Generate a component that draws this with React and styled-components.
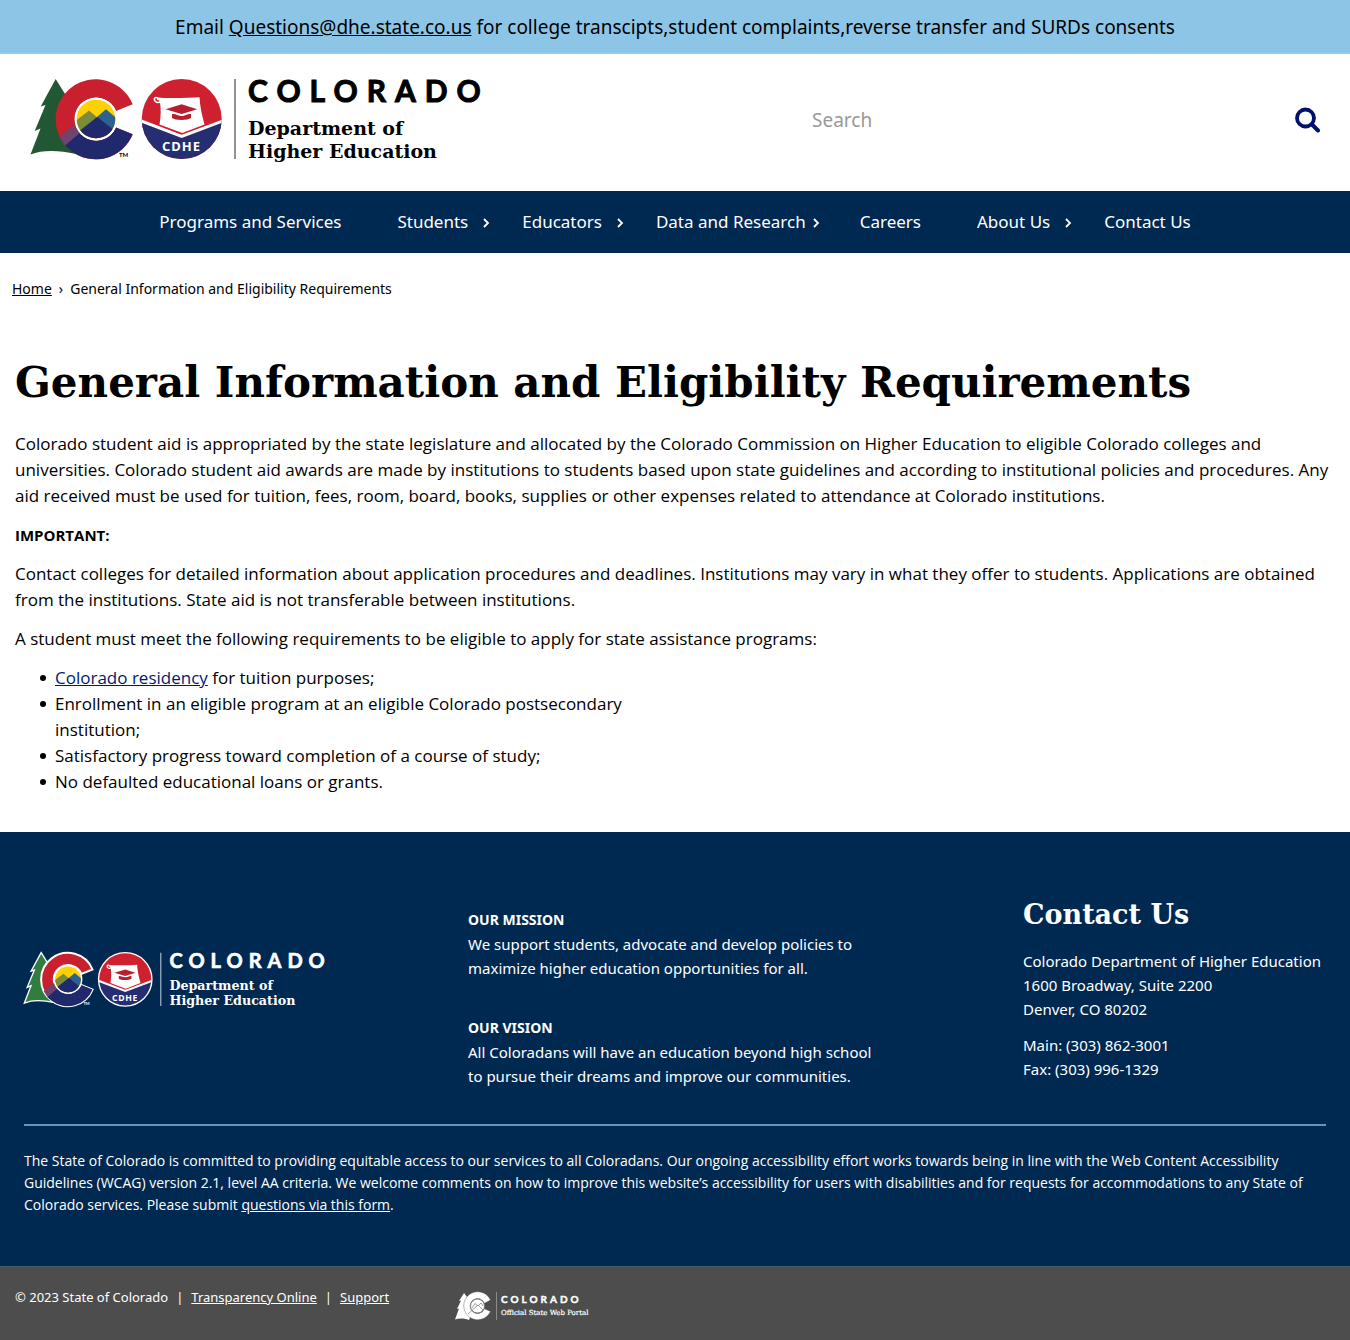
import React from "react";
import styled, { createGlobalStyle } from "styled-components";

const sans = '"Noto Sans", "Open Sans", sans-serif';
const openSans = '"Open Sans", "Noto Sans", sans-serif';
const slab = '"DejaVu Serif", serif';
const navy = "#002952";

const GlobalStyle = createGlobalStyle`
  * { box-sizing: border-box; }
  body { margin: 0; background: #fff; color: #000; font: 15px/24px ${sans}; }
  h1, h2, p, ul, ol { margin: 0; padding: 0; }
  a { color: inherit; }
`;

const Banner = styled.p`
  padding: 14px 24px 12px;
  background: #8dc5e7;
  border-bottom: 1px solid #a9c6e2;
  font-size: 19px;
  line-height: 27px;
  text-align: center;
`;

const Header = styled.header`
  display: flex;
  align-items: flex-start;
  justify-content: space-between;
  gap: 24px;
  padding: 24px 30px 27px;
`;

const LogoLink = styled.a`
  display: block;
  text-decoration: none;
  svg { display: block; overflow: visible; }
`;

const SearchForm = styled.form`
  display: flex;
  align-items: center;
  flex: 0 1 508px;
  padding-top: 24px;
`;

const SearchInput = styled.input`
  flex: 1;
  min-width: 0;
  height: 36px;
  padding: 0;
  border: 0;
  outline: 0;
  background: transparent;
  font: 19px/24px ${sans};
  &::placeholder { color: #999; opacity: 1; }
`;

const IconButton = styled.button`
  display: flex;
  padding: 0;
  border: 0;
  background: none;
  cursor: pointer;
`;

const Nav = styled.nav`
  background: ${navy};
  color: #fff;
`;

const NavList = styled.ul`
  display: flex;
  justify-content: center;
  list-style: none;
`;

const NavItem = styled.li`
  display: flex;
  align-items: center;
  gap: ${(p) => (p.$tight ? "6px" : "14px")};
  height: 62px;
  padding: 0 ${(p) => (p.$tight ? "12px" : p.$menu ? "4px" : "28px")} 0 28px;
`;

const NavLink = styled.a`
  font-size: 17px;
  text-decoration: none;
  white-space: nowrap;
`;

const MenuButton = styled(IconButton)`
  width: 8px;
  color: #fff;
  padding-top: 2px;
`;

const Breadcrumb = styled.ol`
  display: flex;
  gap: 7px;
  padding: 24px 12px 0;
  list-style: none;
  font-size: 14px;
`;

const Content = styled.main`
  padding: 52px 15px 37px;
  font: 17px/26px ${openSans};
`;

const Title = styled.h1`
  margin-bottom: 18px;
  font: bold 42px/60px ${slab};
`;

const Paragraph = styled.p`
  margin-bottom: 13px;
`;

const Important = styled.strong`
  display: block;
  font-size: 15px;
`;

const Requirements = styled.ul`
  max-width: 620px;
  padding-left: 40px;
  list-style: none;
`;

const Requirement = styled.li`
  &::before {
    content: "";
    display: inline-block;
    width: 6px;
    height: 6px;
    margin: 0 9px 3px -15px;
    border-radius: 50%;
    background: #000;
  }
`;

const ContentLink = styled.a`
  color: #001970;
`;

const Footer = styled.footer`
  padding: 60px 24px 50px;
  background: ${navy};
  color: #fff;
`;

const FooterColumns = styled.div`
  display: grid;
  grid-template-columns: 4fr 5fr 303px;
  padding-bottom: 36px;
  border-bottom: 2px solid #6f8fb5;
`;

const FooterLogo = styled.div`
  padding-top: 60px;
`;

const Statements = styled.div`
  display: grid;
  gap: 36px;
  max-width: 420px;
  padding-top: 16px;
`;

const StatementTitle = styled.strong`
  display: block;
  font-size: 14px;
`;

const FooterTitle = styled.h2`
  margin-bottom: 12px;
  font: bold 27px/45px ${slab};
`;

const Address = styled.address`
  margin-bottom: 12px;
  font-style: normal;
`;

const Disclaimer = styled.p`
  padding-top: 24px;
  font-family: ${openSans};
  font-size: 14px;
  line-height: 22px;
`;

const BottomBar = styled.div`
  display: flex;
  gap: 66px;
  padding: 18px 15px 19px;
  border-top: 1px solid #4b5a68;
  background: #4d4d4d;
  color: #fff;
  font-size: 13px;
`;

const Legal = styled.p`
  display: flex;
  gap: 8px;
`;

const PortalLink = styled(LogoLink)`
  padding-top: 6px;
`;

function AgencyLogo({ width, dark, id }) {
  const ink = dark ? "#fff" : "#000";
  const edge = dark ? "#fff" : "none";
  const c = "M102.7 26.3A40 40 0 1 0 102.7 56.3L86 49.5A21.5 21.5 0 1 1 86 33Z";
  const tree = "M25.7 1L10.7 28.5L15.5 27L4.7 53L10.5 50.5L0.5 76.5C12 72 28 72 46 76L60 41L35 16Z";
  return (
    <svg width={width} viewBox="0 0 454 86" role="img" aria-label="Colorado Department of Higher Education">
      <defs>
        <clipPath id={`${id}c`}><path d={c} /></clipPath>
        <clipPath id={`${id}s`}><circle cx="66" cy="41" r="19.3" /></clipPath>
        <clipPath id={`${id}b`}><circle cx="151.7" cy="41" r="40" /></clipPath>
      </defs>
      <path d={tree} fill={dark ? "#2f7d3f" : "#215732"} stroke={edge} strokeWidth="2" />
      <path d={c} fill="#c8202f" stroke={edge} strokeWidth="3" />
      <g clipPath={`url(#${id}c)`}>
        <path d="M26 62L50 42L62 52L32 78Z" fill="#70446f" />
        <path d="M31 71L66 41L76 50L86 48L108 50V86H31Z" fill="#20296c" />
      </g>
      <circle cx="66" cy="41" r="21.5" fill="#fff" />
      <g clipPath={`url(#${id}s)`}>
        <path d="M45 20H87V62H45Z" fill="#ffd100" />
        <path d="M44 44L59 32.5L76 47V62H44Z" fill="#7c8b3a" />
        <path d="M60 45L76 31.3L90 43V62H60Z" fill="#2b628f" />
        <path d="M44 57L67.3 39L90 57V64H44Z" fill="#20296c" />
      </g>
      <text x="89" y="79" fill={ink} fontFamily="Lato, sans-serif" fontSize="6" fontWeight="bold">TM</text>
      <g clipPath={`url(#${id}b)`}>
        <rect x="111" y="0" width="82" height="82" fill="#cf2030" />
        <path d="M111 43L151.7 59L193 43V82H111Z" fill="#242e70" />
        <path d="M110 42.5L151.7 58.5L194 42.5" fill="none" stroke="#fff" strokeWidth="3" />
      </g>
      {dark && <circle cx="151.7" cy="41" r="40" fill="none" stroke="#fff" strokeWidth="2" />}
      <path d="M127 19.4C138 20.5 158 20 169.5 19.2C170 29 172 37 174.5 46.5L152.3 55L129.5 46.5C131 38 131 31 130 24" fill="#fff" />
      <path d="M131 23C129 26 123.5 24 124.5 20.5C126 18.5 129 20 127.5 22" fill="none" stroke="#fff" strokeWidth="1.6" />
      <path d="M135.5 31.2L151.7 26.3L167.2 31.2L151.7 36Z" fill="#b81f2e" />
      <path d="M142 36C147 36 148 38 151.7 38C155.5 38 156 36 161 36V40C158 42.5 145 42.5 142 40Z" fill="#b81f2e" />
      <text x="132" y="73" fill="#fff" fontFamily="Noto Sans, sans-serif" fontSize="13" fontWeight="bold" letterSpacing="1">CDHE</text>
      <path d="M205 1V81" stroke={dark ? "#c9d3df" : "#6d6e70"} strokeWidth="1.5" />
      <text x="218" y="23.5" fill={ink} stroke={ink} strokeWidth="1" fontFamily="Lato, sans-serif" fontSize="30" fontWeight="bold" letterSpacing="9">COLORADO</text>
      <g fill={ink} fontFamily="DejaVu Serif, serif" fontSize="19" fontWeight="bold">
        <text x="218" y="57">Department of</text>
        <text x="218" y="80">Higher Education</text>
      </g>
    </svg>
  );
}

function PortalLogo() {
  return (
    <svg width="136" height="30" viewBox="0 0 136 30" role="img" aria-label="Colorado Official State Web Portal">
      <path d="M9 2L4 10L6 9.5L2 18L4 17.5L0 28.5C4 27 9 27 14 29L20 15L12 6Z" fill="#fff" />
      <path
        d="M35.5 9A14 14 0 1 0 35.5 20.5L29.5 17.7A7.5 7.5 0 1 1 29.5 12.3Z"
        fill="#fff"
        stroke="#4d4d4d"
        strokeWidth="0.4"
      />
      <circle cx="22.5" cy="15" r="7" fill="#fff" stroke="#777" strokeWidth="0.9" />
      <path d="M13 23L23 14L28 19M17 17L20 12.5L23 15L26 12L28 15" fill="none" stroke="#777" strokeWidth="0.7" />
      <path d="M41.5 1V29" stroke="#8c8c8c" />
      <text x="46" y="12" fill="#fff" stroke="#fff" strokeWidth="0.4" fontFamily="Lato, sans-serif" fontSize="10" fontWeight="bold" letterSpacing="3">COLORADO</text>
      <text x="46" y="24" fill="#fff" stroke="#fff" strokeWidth="0.2" fontFamily="DejaVu Serif, serif" fontSize="7">Official State Web Portal</text>
    </svg>
  );
}

const navItems = [
  { label: "Programs and Services" },
  { label: "Students", menu: true },
  { label: "Educators", menu: true },
  { label: "Data and Research", menu: true, tight: true },
  { label: "Careers" },
  { label: "About Us", menu: true },
  { label: "Contact Us" },
];

export default function App() {
  return (
    <>
      <GlobalStyle />
      <Banner>
        Email <a href="mailto:Questions@dhe.state.co.us">Questions@dhe.state.co.us</a> for college transcipts,student
        complaints,reverse transfer and SURDs consents
      </Banner>
      <Header>
        <LogoLink href="#home"><AgencyLogo width="454" id="top" /></LogoLink>
        <SearchForm role="search">
          <SearchInput type="search" placeholder="Search" aria-label="Search" />
          <IconButton type="button" aria-label="Submit search">
            <svg width="26" height="26" viewBox="0 0 26 26" fill="none" stroke="#00106e" strokeLinecap="round">
              <circle cx="11.5" cy="11" r="8.5" strokeWidth="3.8" />
              <path d="M18 17.5L24 23.5" strokeWidth="4" />
            </svg>
          </IconButton>
        </SearchForm>
      </Header>
      <Nav aria-label="Main">
        <NavList>
          {navItems.map(({ label, menu, tight }) => (
            <NavItem key={label} $menu={menu} $tight={tight}>
              <NavLink href="#nav">{label}</NavLink>
              {menu && (
                <MenuButton type="button" aria-label={`Open ${label} menu`}>
                  <svg width="8" height="10" viewBox="0 0 8 10" fill="none" stroke="currentColor" strokeWidth="1.8">
                    <path d="M2 1L6 5L2 9" />
                  </svg>
                </MenuButton>
              )}
            </NavItem>
          ))}
        </NavList>
      </Nav>
      <nav aria-label="Breadcrumb">
        <Breadcrumb>
          <li><a href="#home">Home</a></li>
          <li aria-hidden="true">›</li>
          <li>General Information and Eligibility Requirements</li>
        </Breadcrumb>
      </nav>
      <Content>
        <Title>General Information and Eligibility Requirements</Title>
        <Paragraph>
          Colorado student aid is appropriated by the state legislature and allocated by the Colorado Commission on
          Higher Education to eligible Colorado colleges and universities. Colorado student aid awards are made by
          institutions to students based upon state guidelines and according to institutional policies and procedures.
          Any aid received must be used for tuition, fees, room, board, books, supplies or other expenses related to
          attendance at Colorado institutions.
        </Paragraph>
        <Paragraph><Important>IMPORTANT:</Important></Paragraph>
        <Paragraph>
          Contact colleges for detailed information about application procedures and deadlines. Institutions may vary
          in what they offer to students. Applications are obtained from the institutions. State aid is not
          transferable between institutions.
        </Paragraph>
        <Paragraph>
          A student must meet the following requirements to be eligible to apply for state assistance programs:
        </Paragraph>
        <Requirements>
          <Requirement><ContentLink href="#residency">Colorado residency</ContentLink> for tuition purposes;</Requirement>
          <Requirement>
            Enrollment in an eligible program at an eligible Colorado postsecondary institution;
          </Requirement>
          <Requirement>Satisfactory progress toward completion of a course of study;</Requirement>
          <Requirement>No defaulted educational loans or grants.</Requirement>
        </Requirements>
      </Content>
      <Footer>
        <FooterColumns>
          <FooterLogo>
            <LogoLink href="#home"><AgencyLogo width="303" dark id="foot" /></LogoLink>
          </FooterLogo>
          <Statements>
            <p>
              <StatementTitle>OUR MISSION</StatementTitle>
              We support students, advocate and develop policies to maximize higher education opportunities for all.
            </p>
            <p>
              <StatementTitle>OUR VISION</StatementTitle>
              All Coloradans will have an education beyond high school to pursue their dreams and improve our
              communities.
            </p>
          </Statements>
          <div>
            <FooterTitle>Contact Us</FooterTitle>
            <Address>
              Colorado Department of Higher Education<br />
              1600 Broadway, Suite 2200<br />
              Denver, CO 80202
            </Address>
            <p>
              Main: (303) 862-3001<br />
              Fax: (303) 996-1329
            </p>
          </div>
        </FooterColumns>
        <Disclaimer>
          The State of Colorado is committed to providing equitable access to our services to all Coloradans. Our
          ongoing accessibility effort works towards being in line with the Web Content Accessibility Guidelines (WCAG)
          version 2.1, level AA criteria. We welcome comments on how to improve this website’s accessibility for users
          with disabilities and for requests for accommodations to any State of Colorado services. Please submit{" "}
          <a href="#form">questions via this form</a>.
        </Disclaimer>
      </Footer>
      <BottomBar>
        <Legal>
          <span>© 2023 State of Colorado</span>
          <span>|</span>
          <a href="#transparency">Transparency Online</a>
          <span>|</span>
          <a href="#support">Support</a>
        </Legal>
        <PortalLink href="#portal"><PortalLogo /></PortalLink>
      </BottomBar>
    </>
  );
}
